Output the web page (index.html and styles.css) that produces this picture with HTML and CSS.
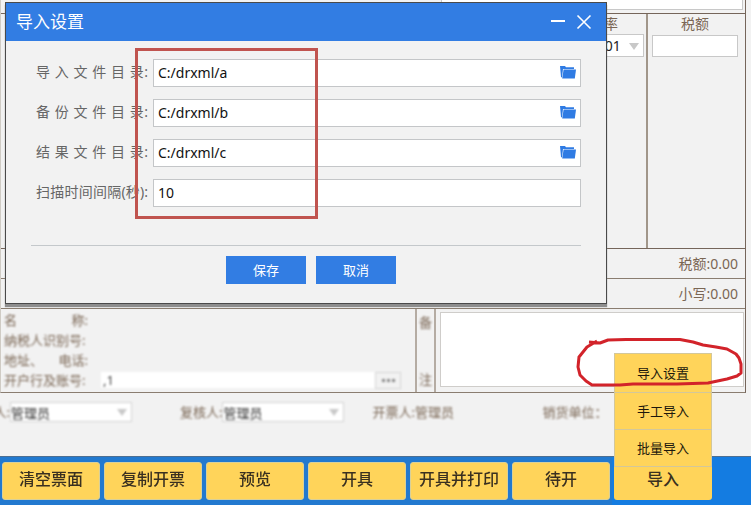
FILE: index.html
```html
<!DOCTYPE html>
<html lang="zh-CN">
<head>
<meta charset="utf-8">
<title>导入设置</title>
<link rel="stylesheet" href="styles.css">
</head>
<body>
<div class="app">
  <main class="invoice">
    <div class="strip"><div class="strip-note"></div></div>
    <div class="items">
      <div class="col"></div>
      <div class="col rate">
        <label class="head" for="rate">税率</label>
        <span class="pick"><select id="rate"><option>0.01</option></select></span>
      </div>
      <div class="col tax">
        <label class="head" for="tax">税额</label>
        <input id="tax" type="text">
      </div>
    </div>
    <div class="total">税额:0.00</div>
    <div class="total">小写:0.00</div>
    <section class="party">
      <div class="party-info soft">
        <div class="info"><span class="info-label"><span>名</span><span>称:</span></span></div>
        <div class="info"><span class="info-label">纳税人识别号:</span></div>
        <div class="info"><span class="info-label"><span>地址、</span><span>电话:</span></span></div>
        <div class="info"><label class="info-label" for="bank">开户行及账号:</label><input id="bank" type="text" value=",1"><button type="button" class="more" aria-label="选择账号"><i></i><i></i><i></i></button></div>
      </div>
      <label class="note-label soft" for="note"><span>备</span><span>注</span></label>
      <div class="note"><textarea id="note"></textarea></div>
    </section>
  </main>
  <section class="signers soft">
    <div class="signer first"><label for="payee">收款人:</label><span class="pick"><select id="payee"><option>管理员</option></select></span></div>
    <div class="signer second"><label for="checker">复核人:</label><span class="pick"><select id="checker"><option>管理员</option></select></span></div>
    <div class="signer third">开票人:管理员</div>
    <div class="signer">销货单位：</div>
  </section>
  <footer class="toolbar">
    <div class="actions">
      <button type="button">清空票面</button>
      <button type="button">复制开票</button>
      <button type="button">预览</button>
      <button type="button">开具</button>
      <button type="button">开具并打印</button>
      <button type="button">待开</button>
    </div>
    <div class="import">
      <button type="button" class="import-main">导入</button>
      <div class="menu">
        <button type="button">导入设置</button>
        <button type="button">手工导入</button>
        <button type="button">批量导入</button>
      </div>
    </div>
  </footer>

  <form class="dialog">
    <header class="titlebar">
      <h1>导入设置</h1>
      <button type="button" aria-label="最小化"><svg width="16" height="16" viewBox="0 0 16 16"><path d="M1 7h14" stroke="#fff" stroke-width="2"/></svg></button>
      <button type="button" aria-label="关闭"><svg width="16" height="16" viewBox="0 0 16 16"><path d="M1.500 1.500L14.500 14.500M14.500 1.500L1.500 14.500" stroke="#fff" stroke-width="1.600"/></svg></button>
    </header>
    <div class="fields">
      <div class="field"><label for="in">导 入 文 件 目 录:</label><div class="box"><input id="in" type="text" value="C:/drxml/a"><button type="button" aria-label="浏览"><svg width="16" height="13" viewBox="0 0 16 13"><path fill="#2f7be3" d="M0 0h5l1 1.200h8V3H3L2 11.500L1 11z"/><path fill="#2f7be3" d="M3.600 3.500H16L14.800 12.500H2.200z"/></svg></button></div></div>
      <div class="field"><label for="bak">备 份 文 件 目 录:</label><div class="box"><input id="bak" type="text" value="C:/drxml/b"><button type="button" aria-label="浏览"><svg width="16" height="13" viewBox="0 0 16 13"><path fill="#2f7be3" d="M0 0h5l1 1.200h8V3H3L2 11.500L1 11z"/><path fill="#2f7be3" d="M3.600 3.500H16L14.800 12.500H2.200z"/></svg></button></div></div>
      <div class="field"><label for="res">结 果 文 件 目 录:</label><div class="box"><input id="res" type="text" value="C:/drxml/c"><button type="button" aria-label="浏览"><svg width="16" height="13" viewBox="0 0 16 13"><path fill="#2f7be3" d="M0 0h5l1 1.200h8V3H3L2 11.500L1 11z"/><path fill="#2f7be3" d="M3.600 3.500H16L14.800 12.500H2.200z"/></svg></button></div></div>
      <div class="field"><label for="gap">扫描时间间隔(秒):</label><div class="box"><input id="gap" type="text" value="10"></div></div>
    </div>
    <div class="buttons">
      <button type="button">保存</button>
      <button type="button">取消</button>
    </div>
    <div class="mark"></div>
  </form>

  <svg class="ring" width="170" height="52" viewBox="575 336 170 52" fill="none" stroke="#d2232a" stroke-width="3" stroke-linejoin="round"><path d="M589 342L600 343L608 340L626 339.500H680L693 342L703 345L716 347L727 349L736 354L739 358L741 364V373L737 376L727 379L708 383L677 384H633L620 385H592L586 381L580 375L578 367L579 357L587 347L597 341"/></svg>
</div>
</body>
</html>
```

FILE: styles.css
```css
* { box-sizing: border-box; }

body {
  margin: 0;
  background: #f2f2f2;
  color: #7a6654;
  font: 14px/20px "Noto Sans", "Noto Sans CJK SC", sans-serif;
}

button, input, select, textarea {
  margin: 0;
  padding: 0;
  border: 0;
  border-radius: 0;
  font: inherit;
  color: inherit;
  background: none;
}

.app {
  position: relative;
  display: flex;
  flex-direction: column;
  min-height: 100vh;
  overflow: hidden;
}

.soft > * { filter: blur(0.8px); }

/* invoice */
.invoice {
  margin-right: 5px;
  border-right: 1px solid #75655a;
  border-bottom: 1px solid #8a7d70;
  border-left: 1px solid #d0ccc5;
}

.strip {
  height: 14px;
  padding: 0 2px 4px 440px;
  border-bottom: 1px solid #75655a;
}

.strip-note {
  height: 10px;
  background: #fff;
  border: 1px solid #c8c8c8;
  border-top: 0;
}

.items {
  display: grid;
  grid-template-columns: 1fr 84px 99px;
  height: 235px;
  border-bottom: 1px solid #75655a;
}

.col {
  display: flex;
  flex-direction: column;
  align-items: center;
  border-left: 2px solid #a1968a;
}

.col:first-child { border: 0; }
.head { line-height: 20px; }
.rate { padding: 0 2px 0 0; }
.rate .pick { width: 100%; height: 23px; border: 1px solid #c8c8c8; color: #222; }
.tax { padding: 0 7px 0 4px; }
.tax input { width: 100%; height: 22px; margin-top: 1px; background: #fff; border: 1px solid #c8c8c8; }

.total {
  height: 30px;
  padding: 5px 7px 0 0;
  text-align: right;
  border-bottom: 1px solid #8a7d70;
}

.pick { position: relative; display: block; flex-shrink: 0; background: #fff; }
.pick select { display: block; width: 100%; height: 100%; appearance: none; }
.rate select { padding-left: 28px; }
.pick::after {
  content: "";
  position: absolute;
  right: 4px;
  top: calc(50% - 3px);
  border: 5px solid transparent;
  border-top: 7px solid #c8c8c8;
  border-bottom: 0;
  pointer-events: none;
}

.party { display: flex; height: 83px; }

.party-info {
  width: 414px;
  padding: 1px 0 0 3px;
  font-size: 13px;
}

.info { display: flex; align-items: center; height: 20px; }
.info-label { display: flex; justify-content: space-between; width: 84px; margin-right: 13px; }
.info input { width: 274px; height: 16px; padding-left: 2px; background: #fff; color: #444; }
.more { display: flex; align-items: center; justify-content: center; gap: 2px; width: 26px; height: 17px; border: 1px solid #d5d5d5; }
.more i { width: 3px; height: 3px; background: #888; }

.note-label {
  display: flex;
  flex-direction: column;
  align-items: center;
  justify-content: space-between;
  width: 21px;
  padding: 3px 0;
  font-size: 13px;
  border: 2px solid #b5aca3;
  border-width: 0 2px;
}

.note { flex: 1; padding: 3px 1px 5px 4px; }
.note textarea { display: block; width: 100%; height: 100%; resize: none; background: #fff; border: 1px solid #cfcdca; }

/* signers */
.signers {
  display: flex;
  height: 63px;
  padding-top: 9px;
  font-size: 13px;
}

.signer { display: flex; height: 20px; white-space: nowrap; }
.signer .pick { width: 122px; height: 20px; border: 1px solid #d2d2d2; color: #333; }
.first { justify-content: flex-end; width: 132px; margin-right: 48px; }
.second { margin-right: 28px; }
.third { width: 170px; }

/* toolbar */
.toolbar {
  display: flex;
  flex: 1;
  background: #147ce1;
  border-top: 1px solid #4d6f92;
}

.actions { display: flex; gap: 4px; padding: 5px 2px; background: #2279cf; }
.actions button, .import-main {
  width: 98px;
  height: 38px;
  padding-bottom: 4px;
  border-radius: 3px;
  background: #ffd45a;
  color: #3a3020;
  font-size: 16px;
  font-weight: 500;
}
.actions button { border: 1px solid #d8d09a; filter: blur(0.6px); }

.import { position: relative; padding: 5px 2px; }
.menu {
  position: absolute;
  left: 2px;
  bottom: 38px;
  display: flex;
  flex-direction: column;
  width: 98px;
  background: #ffd45a;
  border: 1px solid #d3c79a;
}
.menu button { height: 37px; font-size: 13px; color: #1d180c; border-top: 1px solid #d3c79a; }
.menu button:first-child { height: 38px; border-top: 0; }

/* dialog window */
.dialog {
  position: absolute;
  left: 5px;
  top: 2px;
  right: 144px;
  background: #f2f2f2;
  border: 1px solid #4a4a4a;
  box-shadow: 0 3px 1px #8e8e8e;
}

.titlebar {
  display: flex;
  align-items: center;
  gap: 10px;
  height: 38px;
  padding: 0 14px 0 10px;
  background: #327de3;
  color: #fff;
}
.titlebar h1 { flex: 1; margin: 0; font-size: 17px; font-weight: 400; line-height: 24px; }
.titlebar button { width: 16px; height: 16px; }
.titlebar svg, .box svg { display: block; }

.fields {
  display: flex;
  flex-direction: column;
  gap: 12px;
  margin: 0 25px;
  padding: 18px 0 38px 5px;
  border-bottom: 1px solid #c4c8cb;
}

.field { display: flex; align-items: center; height: 28px; color: #666; }
.field label {
  width: 112px;
  margin-right: 5px;
  padding-bottom: 2px;
  white-space: nowrap;
  text-align-last: justify;
}
.box {
  display: flex;
  flex: 1;
  align-items: center;
  height: 28px;
  padding: 0 4px 2px;
  background: #fff;
  border: 1px solid #c4c6c8;
  color: #111;
}
.box input { flex: 1; min-width: 0; height: 24px; }

.buttons { display: flex; justify-content: center; gap: 10px; padding: 10px 0 19px 10px; }
.buttons button { width: 80px; height: 28px; background: #327de3; color: #fff; font-size: 13px; }

/* annotations */
.mark {
  position: absolute;
  left: 129px;
  top: 45px;
  width: 183px;
  height: 171px;
  border: 3px solid #c0544f;
  pointer-events: none;
}
.ring { position: absolute; left: 575px; top: 336px; pointer-events: none; }
```
